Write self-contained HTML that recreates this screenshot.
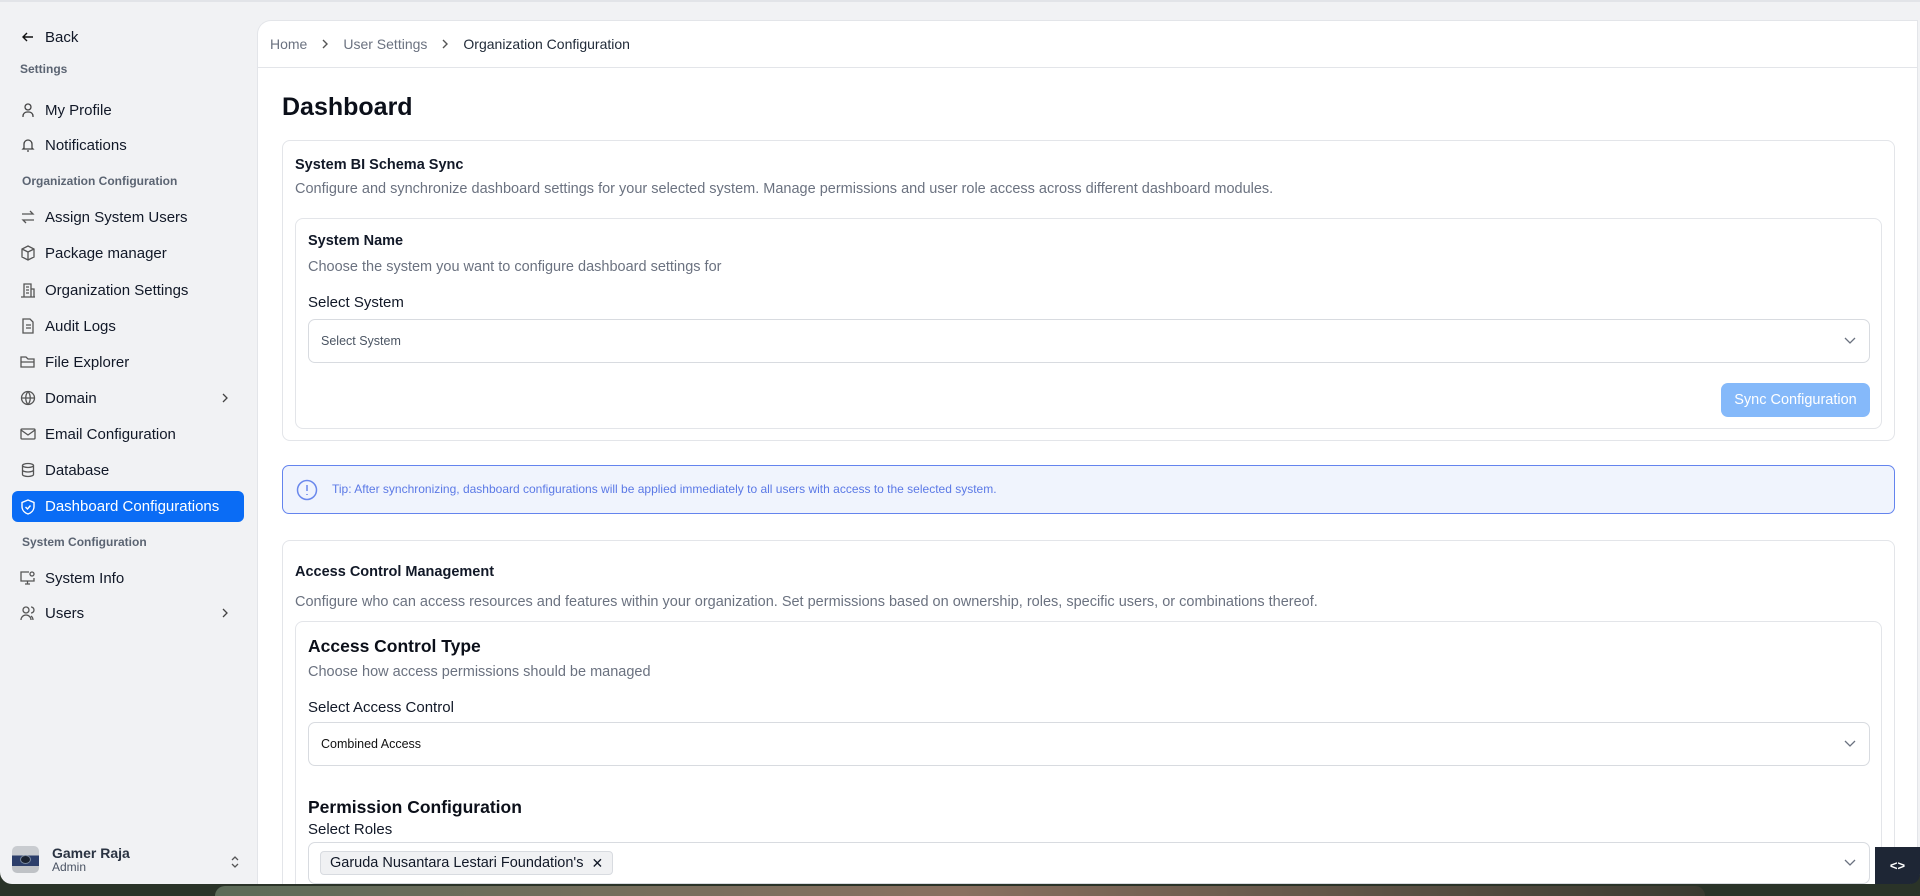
<!DOCTYPE html>
<html><head><meta charset="utf-8"><style>
*{box-sizing:border-box;margin:0;padding:0}
html,body{width:1920px;height:896px;overflow:hidden}
body{background:#2a3328;font-family:"Liberation Sans",sans-serif;position:relative}
.win{position:absolute;left:0;top:0;width:1920px;height:884px;background:#f1f2f4;border-radius:0 0 12px 12px;overflow:hidden;border-top:2px solid #e2e4e8}
.side{position:absolute;left:0;top:0;width:256px;height:880px}
.it{position:absolute;left:12px;width:232px;height:30px;display:flex;align-items:center;padding-left:8px;font-size:15px;color:#111827}
.it svg{width:16px;height:16px;margin-right:9px;flex:none}
.it .ch{position:absolute;right:5px;top:8px;width:10px;height:14px}
.sec{position:absolute;left:22px;font-size:12px;font-weight:bold;color:#5b6472}
.act{background:#0a6cf5;color:#fff;border-radius:6px}
.main{position:absolute;left:257px;top:18px;width:1661px;height:864px;background:#fff;border:1px solid #e3e5e9;border-bottom:none;border-radius:14px 0 0 0;overflow:hidden}
.bc{height:47px;border-bottom:1px solid #e3e5e9;display:flex;align-items:center;padding-left:12px;font-size:14px;color:#6b7280}
.bc svg{margin:0 14px}
h1{position:absolute;left:24px;top:72px;font-size:25px;font-weight:bold;color:#0b0f19}
.card{position:absolute;border:1px solid #e3e5e9;border-radius:8px;background:#fff}
.t{position:absolute;font-size:14.5px;font-weight:bold;color:#111827}
.d{position:absolute;font-size:14.5px;color:#6b7280}
.l{position:absolute;font-size:15px;color:#111827}
.sel{position:absolute;border:1px solid #d8dbe0;border-radius:7px;font-size:12.5px;color:#374151;padding-left:12px;display:flex;align-items:center}
.sel svg{position:absolute;right:12px;top:50%;margin-top:-6px}
</style></head><body>
<div class="win">
<div class="side">
 <div class="it" style="top:20px;font-size:15px"><svg viewBox="0 0 16 16" fill="none" stroke="#111" stroke-width="1.4"><path d="M13 8H3M7 4L3 8l4 4"/></svg>Back</div>
 <div class="sec" style="top:60px;left:20px">Settings</div>
 <div class="it" style="top:93px"><svg viewBox="0 0 16 16" fill="none" stroke="#444" stroke-width="1.3"><circle cx="8" cy="5" r="3"/><path d="M3 15v-1a4 4 0 014-4h2a4 4 0 014 4v1"/></svg>My Profile</div>
 <div class="it" style="top:128px"><svg viewBox="0 0 16 16" fill="none" stroke="#444" stroke-width="1.3"><path d="M4 11V7a4 4 0 018 0v4l1 1H3zM7 14h2"/></svg>Notifications</div>
 <div class="sec" style="top:172px">Organization Configuration</div>
 <div class="it" style="top:200px"><svg viewBox="0 0 16 16" fill="none" stroke="#555" stroke-width="1.3"><path d="M2 5h11l-3-3M14 11H3l3 3"/></svg>Assign System Users</div>
 <div class="it" style="top:236px"><svg viewBox="0 0 16 16" fill="none" stroke="#555" stroke-width="1.3"><path d="M8 1l6 3v8l-6 3-6-3V4zM2 4l6 3 6-3M8 7v8"/></svg>Package manager</div>
 <div class="it" style="top:273px"><svg viewBox="0 0 16 16" fill="none" stroke="#555" stroke-width="1.3"><path d="M4 15V2h7v13M1 15h14M11 7h3v8M6 5h3M6 8h3M6 11h3"/></svg>Organization Settings</div>
 <div class="it" style="top:309px"><svg viewBox="0 0 16 16" fill="none" stroke="#555" stroke-width="1.3"><path d="M3 1h7l3 3v11H3zM6 7h5M6 10h5"/></svg>Audit Logs</div>
 <div class="it" style="top:345px"><svg viewBox="0 0 16 16" fill="none" stroke="#555" stroke-width="1.3"><path d="M1 13V3h5l2 2h6v8zM1 8h13"/></svg>File Explorer</div>
 <div class="it" style="top:381px"><svg viewBox="0 0 16 16" fill="none" stroke="#555" stroke-width="1.3"><circle cx="8" cy="8" r="6.5"/><path d="M1.5 8h13M8 1.5c-3 3.5-3 9.5 0 13M8 1.5c3 3.5 3 9.5 0 13"/></svg>Domain<svg class="ch" viewBox="0 0 10 14" fill="none" stroke="#444" stroke-width="1.3"><path d="M3 3l4 4-4 4"/></svg></div>
 <div class="it" style="top:417px"><svg viewBox="0 0 16 16" fill="none" stroke="#555" stroke-width="1.3"><rect x="1" y="3" width="14" height="10" rx="1"/><path d="M1 4l7 5 7-5"/></svg>Email Configuration</div>
 <div class="it" style="top:453px"><svg viewBox="0 0 16 16" fill="none" stroke="#555" stroke-width="1.3"><ellipse cx="8" cy="3.5" rx="5.5" ry="2"/><path d="M2.5 3.5v9c0 1.1 2.5 2 5.5 2s5.5-.9 5.5-2v-9M2.5 8c0 1.1 2.5 2 5.5 2s5.5-.9 5.5-2"/></svg>Database</div>
 <div class="it act" style="top:489px;height:31px;color:#fff"><svg viewBox="0 0 16 16" fill="none" stroke="#fff" stroke-width="1.4"><path d="M8 1l6 2.5v4c0 4-3 6.5-6 7.5-3-1-6-3.5-6-7.5v-4z"/><path d="M5.5 8l2 2 3-3.5"/></svg>Dashboard Configurations</div>
 <div class="sec" style="top:533px">System Configuration</div>
 <div class="it" style="top:561px"><svg viewBox="0 0 16 16" fill="none" stroke="#555" stroke-width="1.3"><path d="M9 2H1v9h13V8M5 14h5M7.5 11v3"/><circle cx="12" cy="4" r="2"/></svg>System Info</div>
 <div class="it" style="top:596px"><svg viewBox="0 0 16 16" fill="none" stroke="#555" stroke-width="1.3"><circle cx="6" cy="5" r="3"/><path d="M1 15a5 5 0 0110 0M11 2a3 3 0 010 6M13 15a5 5 0 00-2-4"/></svg>Users<svg class="ch" viewBox="0 0 10 14" fill="none" stroke="#444" stroke-width="1.3"><path d="M3 3l4 4-4 4"/></svg></div>
 <div style="position:absolute;left:12px;top:844px;width:27px;height:27px;border-radius:5px;background:linear-gradient(#c9ccd0 0 35%,#2c3e6a 35% 75%,#bfc2c6 75%)"><div style="position:absolute;left:8px;top:9px;width:11px;height:9px;border-radius:50%;background:#1a2230;border:1px solid #7a8aa0"></div></div>
 <div style="position:absolute;left:52px;top:843px;font-size:14px;font-weight:bold;color:#2a3342">Gamer Raja</div>
 <div style="position:absolute;left:52px;top:858px;font-size:12px;color:#4a5363">Admin</div>
 <svg style="position:absolute;left:230px;top:852px" width="10" height="16" viewBox="0 0 10 16" fill="none" stroke="#555" stroke-width="1.3"><path d="M2 6l3-3 3 3M2 10l3 3 3-3"/></svg>
</div>
<div class="main">
 <div class="bc">Home<svg width="8" height="12" viewBox="0 0 8 12" fill="none" stroke="#555" stroke-width="1.4"><path d="M2 2l4 4-4 4"/></svg>User Settings<svg width="8" height="12" viewBox="0 0 8 12" fill="none" stroke="#555" stroke-width="1.4"><path d="M2 2l4 4-4 4"/></svg><span style="color:#1f2937">Organization Configuration</span></div>
 <h1>Dashboard</h1>
 <div class="card" style="left:24px;top:119px;width:1613px;height:301px">
  <div class="t" style="left:12px;top:16px">System BI Schema Sync</div>
  <div class="d" style="left:12px;top:40px">Configure and synchronize dashboard settings for your selected system. Manage permissions and user role access across different dashboard modules.</div>
  <div class="card" style="left:12px;top:77px;width:1587px;height:211px">
   <div class="t" style="left:12px;top:14px">System Name</div>
   <div class="d" style="left:12px;top:40px">Choose the system you want to configure dashboard settings for</div>
   <div class="l" style="left:12px;top:75px">Select System</div>
   <div class="sel" style="left:12px;top:100px;width:1562px;height:44px;color:#4b5563">Select System<svg width="14" height="12" viewBox="0 0 14 12" fill="none" stroke="#6b7280" stroke-width="1.3"><path d="M2 3l5 5 5-5"/></svg></div>
   <div style="position:absolute;left:1425px;top:164px;width:149px;height:34px;border-radius:7px;background:#85b9fa;color:#fff;font-size:14.5px;display:flex;align-items:center;justify-content:center">Sync Configuration</div>
  </div>
 </div>
 <div style="position:absolute;left:24px;top:444px;width:1613px;height:49px;border:1px solid #6484ee;border-radius:7px;background:#f0f4fd">
  <svg style="position:absolute;left:13px;top:13px" width="22" height="22" viewBox="0 0 22 22" fill="none" stroke="#6a88ec" stroke-width="1.5"><circle cx="11" cy="11" r="9.5"/><path d="M11 6v6M11 15v1"/></svg>
  <div style="position:absolute;left:49px;top:16px;font-size:12px;color:#5b79e6">Tip: After synchronizing, dashboard configurations will be applied immediately to all users with access to the selected system.</div>
 </div>
 <div class="card" style="left:24px;top:519px;width:1613px;height:345px;border-bottom:none;border-radius:8px 8px 0 0;overflow:hidden">
  <div class="t" style="left:12px;top:23px">Access Control Management</div>
  <div class="d" style="left:12px;top:53px">Configure who can access resources and features within your organization. Set permissions based on ownership, roles, specific users, or combinations thereof.</div>
  <div class="card" style="left:12px;top:80px;width:1587px;height:265px;border-bottom:none;border-radius:8px 8px 0 0;overflow:hidden">
   <div style="position:absolute;left:12px;top:14px;font-size:17.5px;font-weight:bold;color:#0b0f19">Access Control Type</div>
   <div class="d" style="left:12px;top:42px">Choose how access permissions should be managed</div>
   <div class="l" style="left:12px;top:77px">Select Access Control</div>
   <div class="sel" style="left:12px;top:100px;width:1562px;height:44px;color:#111">Combined Access<svg width="14" height="12" viewBox="0 0 14 12" fill="none" stroke="#6b7280" stroke-width="1.3"><path d="M2 3l5 5 5-5"/></svg></div>
   <div style="position:absolute;left:12px;top:175px;font-size:17.5px;font-weight:bold;color:#0b0f19">Permission Configuration</div>
   <div class="l" style="left:12px;top:199px">Select Roles</div>
   <div class="sel" style="left:12px;top:220px;width:1562px;height:42px;padding-left:11px"><span style="display:inline-flex;align-items:center;height:24px;padding:0 9px;background:#f0f1f3;border:1px solid #d8dbe0;border-radius:4px;font-size:14.5px;color:#111827">Garuda Nusantara Lestari Foundation's<span style="margin-left:8px;font-size:14px">✕</span></span><svg width="14" height="12" viewBox="0 0 14 12" fill="none" stroke="#6b7280" stroke-width="1.3"><path d="M2 3l5 5 5-5"/></svg></div>
  </div>
 </div>
</div>
</div>
<div style="position:absolute;left:215px;top:886px;width:1490px;height:10px;border-radius:14px 14px 0 0;background:linear-gradient(90deg,#5c6b58,#8a7060,#3a3a30)"></div>
<div style="position:absolute;left:1875px;top:847px;width:45px;height:37px;background:#1e2635;color:#fff;font-size:13px;font-weight:bold;display:flex;align-items:center;justify-content:center;border-radius:0 0 10px 0">&lt;&gt;</div>
</body></html>
